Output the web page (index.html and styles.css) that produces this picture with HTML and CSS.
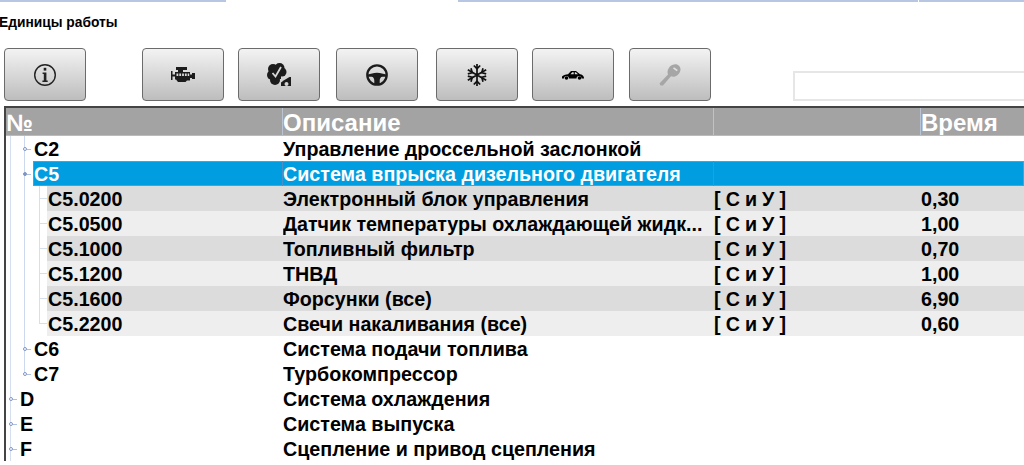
FILE: index.html
```html
<!DOCTYPE html>
<html lang="ru">
<head>
<meta charset="utf-8">
<title>Единицы работы</title>
<link rel="stylesheet" href="styles.css">
</head>
<body>
<div class="topstrip"><span class="strip strip-a"></span><span class="strip strip-b"></span><span class="strip strip-c"></span></div>
<h1 class="title">Единицы работы</h1>
<div class="toolbar">
  <button class="tool tool-info" type="button"><svg class="ico" width="24" height="24" viewBox="0 0 24 24"><circle cx="12" cy="12" r="10.300" fill="none" stroke="#222" stroke-width="1.400"/><rect x="10.700" y="4.800" width="2.600" height="2.800" fill="#222"/><path d="M9.600 9.600h3.800v8h1.300v1.400H9.400v-1.400h1.400v-6.600H9.600z" fill="#222"/></svg></button>
  <button class="tool tool-engine" type="button"><svg class="ico" width="24" height="15" viewBox="0 0 24 15"><path d="M0 4h1.500v3.500H4V5h3V3H5V0h11v3h-4v2h7v2.500h2V6h3v6h-3v-1h-2v2.500h-3L14.500 15H7l-2-2.500H4V9.500H1.500V13H0z" fill="#1c1c1c"/><path d="M5.500 6.500h1.800v2.500H5.500zm2.800 0h1.800v2.500H8.300zm2.800 0h1.800v2.500h-1.800zm2.800 0h1.800v2.500h-1.800zm2.800 0h1.500v2.500h-1.500z" fill="#d8d8d8"/></svg></button>
  <button class="tool tool-service" type="button"><svg class="ico" width="24" height="24" viewBox="0 0 24 24"><g fill="#1c1c1c"><circle cx="6" cy="6" r="5"/><circle cx="12.500" cy="5" r="5"/><circle cx="15" cy="9" r="4.500"/><circle cx="5" cy="12" r="5"/><circle cx="8" cy="17" r="5"/><rect x="5" y="5" width="9" height="11"/></g><path d="M5.500 10l3 3.500 5.500-9.500" fill="none" stroke="#d8d8d8" stroke-width="1.800"/><path d="M12 22h12v-9h-2l-6 3.500-3 2.500z" fill="#d4d4d4"/><path d="M14 23v-3.500l3-2.300 5.500-3.200H24V23z" fill="#1c1c1c"/><circle cx="19.500" cy="21" r="2" fill="#d4d4d4"/></svg></button>
  <button class="tool tool-wheel" type="button"><svg class="ico" width="22" height="22" viewBox="0 0 22 22"><circle cx="11" cy="11" r="9.700" fill="none" stroke="#1c1c1c" stroke-width="2.300"/><path d="M1.500 10.500C5 10 7 8.800 11 8.800s6 1.200 9.500 1.700v2.300h-4c-1.800 0-2.800 2-2.800 3.700V21H8.300v-4.500c0-1.700-1-3.700-2.800-3.700h-4z" fill="#1c1c1c"/></svg></button>
  <button class="tool tool-snow" type="button"><svg class="ico" width="20" height="22" viewBox="0 0 20 22"><g fill="none" stroke="#111" stroke-width="1.700"><path d="M10 0v22M.8 5.700l18.400 10.600M.8 16.300L19.200 5.700"/><path d="M6.800 1.500L10 4.700l3.200-3.200M6.800 20.500L10 17.300l3.200 3.200M.8 9.900l4.400-1.200L4 4.300M19.200 12.100l-4.400 1.200 1.200 4.400M.8 12.100l4.400 1.200L4 17.700M19.200 9.900l-4.400-1.200L16 4.300"/></g></svg></button>
  <button class="tool tool-car" type="button"><svg class="ico" width="22" height="10" viewBox="0 0 22 10"><path d="M0 8.500V6.500C1 5.200 3.500 4.500 6 4.200L9 1h5l4 3.300c2 .3 3.500 1.200 4 3.400v.8h-2.500a2.500 2.500 0 0 0-5 0H7a2.500 2.500 0 0 0-5 0z" fill="#000"/><circle cx="4.500" cy="8" r="1.800" fill="#000"/><circle cx="17.500" cy="8" r="1.800" fill="#000"/><path d="M8.500 4.200l1.800-2h1.400v2zm4.300 0v-2h1l2.200 2z" fill="#ddd"/></svg></button>
  <button class="tool tool-key" type="button"><svg class="ico" width="22" height="22" viewBox="0 0 22 22"><path d="M0.500 19.500L9 10.500c-1-2.500-.5-5 1.500-7.500 2-2.200 5-3 7.500-2.500 2.500 1 3.800 3 3.500 5.500-.5 3-2.500 5.500-5.500 6.500-1.500.5-3 .3-4-.2L4 21.500 1.500 21.500z" fill="#a6a6a6"/><path d="M14 4.500l3.800 2.800 1-1.300L15 3.200z" fill="#e0e0e0"/></svg></button>
  <input class="search" type="text" aria-label="Поиск">
</div>
<section class="table">
  <div class="head">
    <div class="hcell hcell-no">№</div>
    <div class="hcell">Описание</div>
    <div class="hcell"></div>
    <div class="hcell">Время</div>
  </div>
  <div class="tree">
    <div class="group group-c">
      <div class="row lvl2"><i class="node"></i><span class="no">C2</span><span class="desc">Управление дроссельной заслонкой</span><span></span><span></span></div>
      <div class="row lvl2 selected"><i class="node"></i><span class="no">C5</span><span class="desc">Система впрыска дизельного двигателя</span><span class="tag"></span><span></span></div>
      <div class="group group-c5">
        <div class="row lvl3 even"><i class="tick"></i><span class="no">C5.0200</span><span class="desc">Электронный блок управления</span><span class="tag">[ С и У ]</span><span class="time">0,30</span></div>
        <div class="row lvl3 odd"><i class="tick"></i><span class="no">C5.0500</span><span class="desc">Датчик температуры охлаждающей жидк...</span><span class="tag">[ С и У ]</span><span class="time">1,00</span></div>
        <div class="row lvl3 even"><i class="tick"></i><span class="no">C5.1000</span><span class="desc">Топливный фильтр</span><span class="tag">[ С и У ]</span><span class="time">0,70</span></div>
        <div class="row lvl3 odd"><i class="tick"></i><span class="no">C5.1200</span><span class="desc">ТНВД</span><span class="tag">[ С и У ]</span><span class="time">1,00</span></div>
        <div class="row lvl3 even"><i class="tick"></i><span class="no">C5.1600</span><span class="desc">Форсунки (все)</span><span class="tag">[ С и У ]</span><span class="time">6,90</span></div>
        <div class="row lvl3 odd"><i class="tick"></i><span class="no">C5.2200</span><span class="desc">Свечи накаливания (все)</span><span class="tag">[ С и У ]</span><span class="time">0,60</span></div>
      </div>
      <div class="row lvl2"><i class="node"></i><span class="no">C6</span><span class="desc">Система подачи топлива</span><span></span><span></span></div>
      <div class="row lvl2"><i class="node"></i><span class="no">C7</span><span class="desc">Турбокомпрессор</span><span></span><span></span></div>
    </div>
    <div class="row lvl1"><i class="node"></i><span class="no">D</span><span class="desc">Система охлаждения</span><span></span><span></span></div>
    <div class="row lvl1"><i class="node"></i><span class="no">E</span><span class="desc">Система выпуска</span><span></span><span></span></div>
    <div class="row lvl1"><i class="node"></i><span class="no">F</span><span class="desc">Сцепление и привод сцепления</span><span></span><span></span></div>
  </div>
</section>
</body>
</html>
```
FILE: styles.css
```css
* { box-sizing: border-box; }
html, body { margin: 0; height: 100%; overflow: hidden; }
body {
  background: #fff;
  color: #000;
  font-family: "Liberation Sans", Arial, sans-serif;
}
.topstrip { display: flex; height: 2px; }
.strip { height: 2px; background: #b7c6e2; }
.strip-a { width: 226px; margin-right: 232px; }
.strip-b { width: 460px; margin-right: 1px; }
.strip-c { flex: 1; }
.title {
  margin: 13px 0 0 -1px;
  height: 33px;
  font-size: 13.800px;
  line-height: 16px;
  font-weight: bold;
}
.toolbar { display: flex; align-items: flex-start; height: 58px; padding-left: 4px; }
.tool {
  display: flex;
  align-items: center;
  justify-content: center;
  flex: none;
  width: 82px;
  height: 53px;
  padding: 0;
  margin-right: 14px;
  border: 1px solid #6b6b6b;
  border-radius: 4px;
  background: linear-gradient(#f3f3f3, #bdbdbd);
}
.ico { display: block; }
.tool-info { margin-right: 56px; }
.tool-service { margin-right: 16px; }
.tool-wheel { margin-right: 18px; }
.tool-car { margin-right: 15px; }
.search {
  width: 231px;
  height: 30px;
  margin: 23px 0 0 auto;
  border: 2px solid #e6e6e6;
  border-right: 0;
  background: #fff;
}
.table {
  margin-left: 4px;
  border-top: 2px solid #444;
  border-left: 2px solid #444;
}
.head {
  display: grid;
  grid-template-columns: 276px 431px 207px 1fr;
  height: 28px;
  background: #a3a3a3;
  border-bottom: 1px solid #b4bcc8;
}
.hcell {
  border-left: 1px solid #b9c3d2;
  color: #fff;
  font-size: 24px;
  line-height: 29px;
  font-weight: bold;
  overflow: hidden;
}
.hcell-no { border-left: 0; }
.tree { position: relative; }
.tree::before {
  content: "";
  position: absolute;
  left: 4px;
  top: 0;
  bottom: 0;
  width: 1px;
  background: #d5dff0;
}
.group { position: relative; }
.group::before {
  content: "";
  position: absolute;
  top: 0;
  width: 1px;
  background: #ccd8ee;
}
.group-c::before { left: 18px; bottom: 12px; }
.group-c5::before { left: 33px; bottom: 12px; background: #d5dff0; }
.row {
  position: relative;
  display: grid;
  height: 25px;
  font-size: 19.700px;
  line-height: 26px;
  font-weight: bold;
}
.lvl1 { grid-template-columns: 263px 431px 207px 1fr; margin-left: 14px; }
.lvl2 { grid-template-columns: 250px 431px 207px 1fr; margin-left: 27px; }
.lvl3 { grid-template-columns: 236px 431px 207px 1fr; margin-left: 41px; }
.lvl2 .no, .lvl3 .no { padding-left: 1px; }
.even { background: #dcdcdc; }
.odd { background: #eeeeee; }
.selected { background: #009ee0; color: #fff; box-shadow: inset 0 0 0 1px #2aaee6; }
.selected .desc, .selected .tag { margin-left: -1px; border-left: 1px solid #4a8fc8; }
.desc { white-space: nowrap; overflow: hidden; }
.tag { letter-spacing: -0.2px; }
.node {
  position: absolute;
  left: -10px;
  top: 11px;
  width: 4px;
  height: 4px;
  border: 1px solid #7f97c6;
  border-radius: 50%;
  background: #fff;
}
.lvl1 .node { left: -11px; }
.selected .node { background: #7f97c6; }
.node::after {
  content: "";
  position: absolute;
  left: 3px;
  top: 1px;
  width: 4px;
  height: 1px;
  background: #b0c0de;
}
.tick {
  position: absolute;
  left: -8px;
  top: 12px;
  width: 8px;
  height: 1px;
  background: #d5dff0;
}
```
